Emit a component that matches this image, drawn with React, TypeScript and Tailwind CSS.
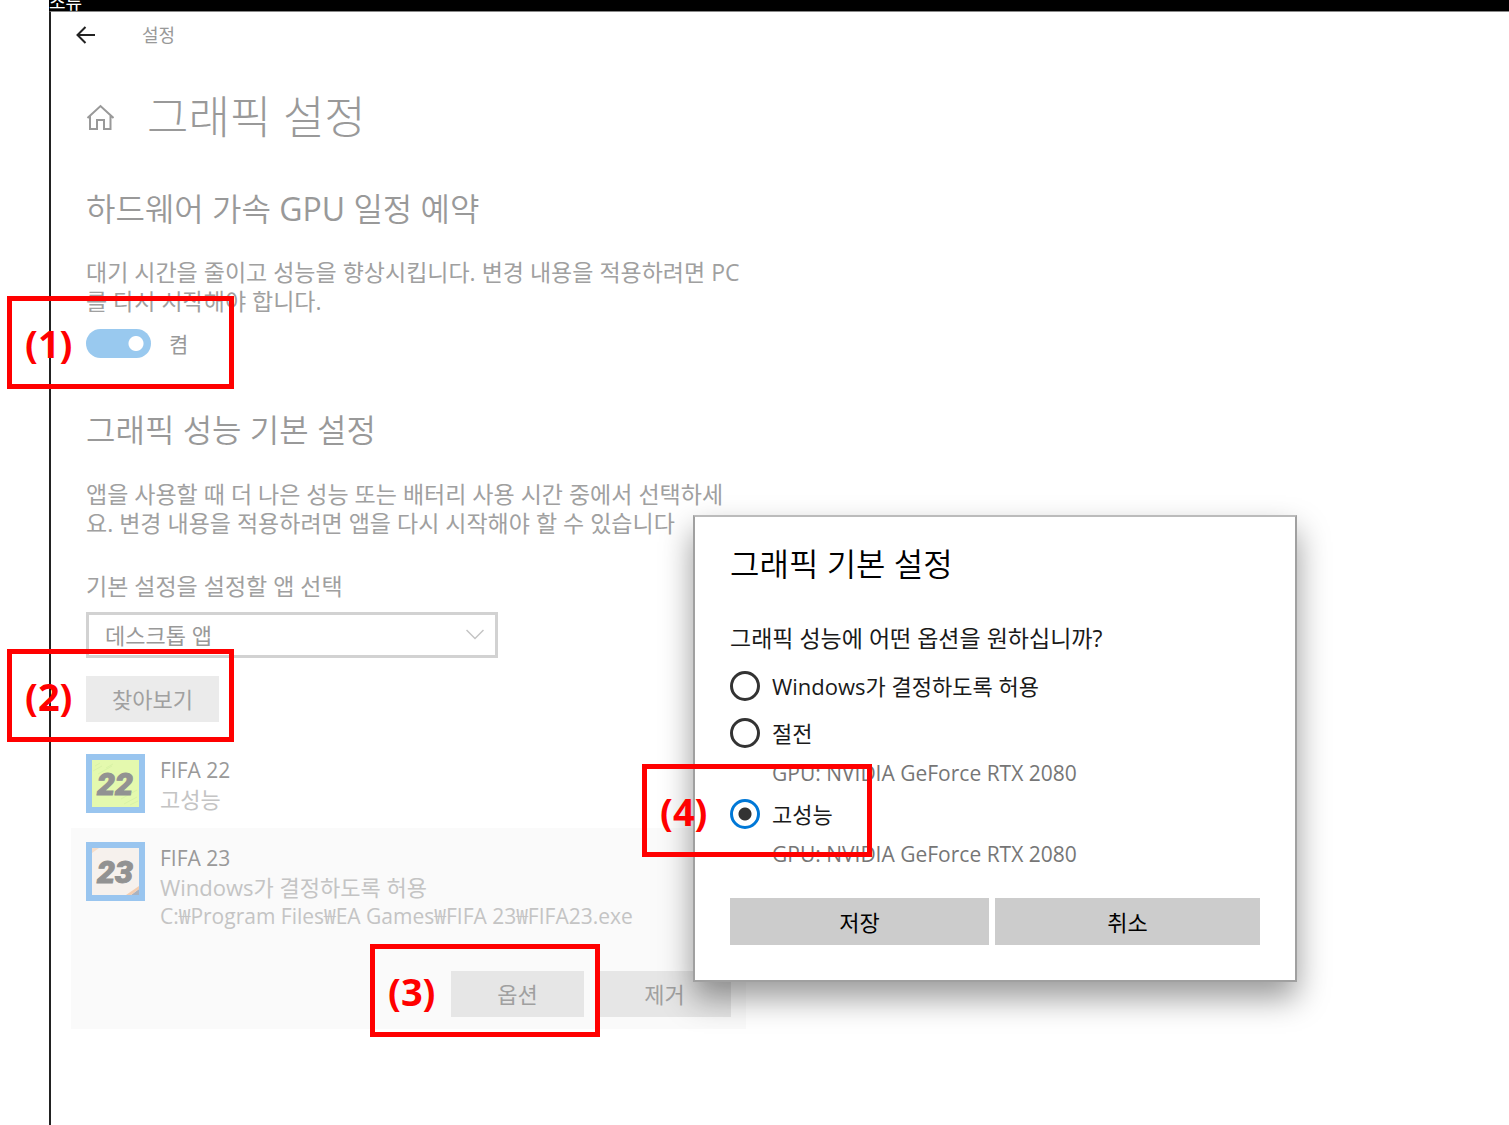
import { useState } from "react";
import type { ReactNode } from "react";

interface CalloutProps {
  label: string;
  className: string;
}

const Callout = ({ label, className }: CalloutProps) => (
  <div
    className={`pointer-events-none absolute z-20 flex h-[93px] items-center border-5 border-[#ff0000] pl-[13px] text-[38px] leading-10 font-bold text-[#ff0000] ${className}`}
  >
    {label}
  </div>
);

const SectionTitle = ({ children }: { children: ReactNode }) => (
  <h2 className="text-[32px] leading-10 font-[350] text-[#999]">{children}</h2>
);

const GrayButton = ({ children }: { children: ReactNode }) => (
  <button type="button" className="h-[46px] w-[133px] bg-black/8 text-[22px] leading-7 text-[#a0a0a0]">
    {children}
  </button>
);

const AppIcon = ({ kind }: { kind: "22" | "23" }) => (
  <svg viewBox="0 0 59 59" className="size-[59px] shrink-0" aria-hidden="true">
    <rect width="59" height="59" fill="#99c5ef" />
    <rect x="6" y="6" width="47" height="47" fill={kind === "22" ? "#e4f9ae" : "#f6f1ed"} />
    {kind === "22" ? (
      <path
        d="M7 17l9-5M12 20l14-8M20 14l7-4M38 50l13-7M35 45l16-9M44 51l8-4M9 12l5-3"
        stroke="#d9f3a6"
        strokeWidth="1"
      />
    ) : (
      <>
        <path d="M6 6h7l-7 5z" fill="#f6ddc9" />
        <path d="M45 53l8-6v6z" fill="#a9b2c0" />
        <path d="M40 53l13-9v3l-8 6z" fill="#f3cdb0" />
      </>
    )}
    <text
      x="29"
      y="41"
      textAnchor="middle"
      fill="#929292"
      stroke="#929292"
      strokeWidth="1"
      fontFamily="Roboto, sans-serif"
      fontSize="32"
      fontStyle="italic"
      fontWeight="900"
    >
      {kind}
    </text>
  </svg>
);

interface OptionProps {
  value: string;
  selected: string;
  onSelect: (value: string) => void;
  children: ReactNode;
}

const Option = ({ value, selected, onSelect, children }: OptionProps) => (
  <label className="flex h-[30px] items-center gap-3 text-[22px] leading-7 text-[#1a1a1a]">
    <input
      type="radio"
      name="gpu-preference"
      value={value}
      checked={selected === value}
      onChange={() => onSelect(value)}
      className="size-[30px] appearance-none rounded-full border-3 border-[#333] bg-white checked:border-[#0078d7] checked:bg-[radial-gradient(circle,#333_6px,transparent_7px)]"
    />
    {children}
  </label>
);

const GpuName = () => <p className="pl-[42px] text-[21px] leading-7 text-[#767676]">GPU: NVIDIA GeForce RTX 2080</p>;

const PreferenceDialog = () => {
  const [selected, setSelected] = useState("high");

  return (
    <section
      role="dialog"
      aria-labelledby="dialog-title"
      className="absolute top-[515px] left-[693px] z-10 w-[604px] border-2 border-[#a0a0a0] border-t-[#bbb] bg-white px-[35px] pt-[27px] pb-[35px] shadow-[0_16px_30px_rgba(0,0,0,0.4)]"
    >
      <h2 id="dialog-title" className="text-[32px] leading-10 font-[350] text-black">
        그래픽 기본 설정
      </h2>
      <p className="mt-[40px] text-[23px] leading-7 text-[#1a1a1a]">그래픽 성능에 어떤 옵션을 원하십니까?</p>
      <div className="mt-[19px]">
        <Option value="auto" selected={selected} onSelect={setSelected}>
          Windows가 결정하도록 허용
        </Option>
      </div>
      <div className="mt-[17px]">
        <Option value="saving" selected={selected} onSelect={setSelected}>
          절전
        </Option>
        <div className="mt-[11px]">
          <GpuName />
        </div>
      </div>
      <div className="relative mt-[12px]">
        <Option value="high" selected={selected} onSelect={setSelected}>
          고성능
        </Option>
        <div className="mt-[11px]">
          <GpuName />
        </div>
        <Callout label="(4)" className="-top-[35px] -left-[88px] w-[230px]" />
      </div>
      <div className="mt-[30px] flex gap-1.5 text-[22px] leading-7 text-black">
        <button type="button" className="h-[47px] w-[259px] bg-[#ccc]">
          저장
        </button>
        <button type="button" className="h-[47px] flex-1 bg-[#ccc]">
          취소
        </button>
      </div>
    </section>
  );
};

export default function App() {
  const [enabled, setEnabled] = useState(true);

  return (
    <div className="relative min-h-screen overflow-hidden bg-white pl-[49px] font-['Open_Sans','Noto_Sans_CJK_KR',sans-serif]">
      <div className="flex h-[11px] items-end overflow-hidden bg-black text-[18px] leading-[18px] text-white">조류</div>
      <main className="min-h-[1114px] border-t border-l-2 border-t-[#888] border-l-[#222] pl-[35px]">
        <div className="-ml-3 flex h-[46px] items-center">
          <button type="button" aria-label="뒤로" className="flex size-6 items-center justify-center">
            <svg viewBox="0 0 20 20" className="size-5" fill="none" stroke="#222" strokeWidth="2">
              <path d="M19 10H2M9.500 2L1.500 10l8 8" />
            </svg>
          </button>
          <span className="ml-11 text-[18px] leading-6 text-[#999]">설정</span>
        </div>

        <header className="mt-[27px] flex h-16 items-center text-[#999]">
          <a href="#home" aria-label="홈">
            <svg viewBox="0 0 28 28" className="size-7" fill="none" stroke="currentColor" strokeWidth="2">
              <path d="M1.500 15L14.500 3l13 12M4 13v13h7v-9h7v9h6.500V13" />
            </svg>
          </a>
          <h1 className="ml-[33px] text-[45px] leading-[64px] font-light">그래픽 설정</h1>
        </header>

        <div className="mt-10">
          <SectionTitle>
            하드웨어 가속 <span className="font-normal">GPU</span> 일정 예약
          </SectionTitle>
        </div>
        <p className="mt-[29px] text-[23px] leading-[29px] text-[#a0a0a0]">
          대기 시간을 줄이고 성능을 향상시킵니다. 변경 내용을 적용하려면 PC
          <br />를 다시 시작해야 합니다.
        </p>
        <div className="relative mt-[13px] flex h-[29px] items-center">
          <label className="flex items-center gap-[18px] text-[21px] leading-7 text-[#999]">
            <input
              type="checkbox"
              role="switch"
              checked={enabled}
              onChange={() => setEnabled(!enabled)}
              className="h-[29px] w-[65px] appearance-none rounded-full bg-[#c8c8c8] bg-[radial-gradient(circle_at_15px_center,white_7px,transparent_8px)] checked:bg-[#99c9ef] checked:bg-[radial-gradient(circle_at_50px_center,white_7px,transparent_8px)]"
            />
            켬
          </label>
          <Callout label="(1)" className="-top-[33px] -left-[79px] w-[227px]" />
        </div>

        <div className="mt-[52px]">
          <SectionTitle>그래픽 성능 기본 설정</SectionTitle>
        </div>
        <p className="mt-[30px] text-[23px] leading-[29px] text-[#a0a0a0]">
          앱을 사용할 때 더 나은 성능 또는 배터리 사용 시간 중에서 선택하세
          <br />
          요. 변경 내용을 적용하려면 앱을 다시 시작해야 할 수 있습니다
        </p>

        <label htmlFor="app-type" className="mt-[34px] block text-[23px] leading-7 text-[#a0a0a0]">
          기본 설정을 설정할 앱 선택
        </label>
        <div className="relative mt-3 h-[46px] w-[412px]">
          <select
            id="app-type"
            className="size-full appearance-none border-3 border-[#d2d2d2] bg-white pl-4 text-[22px] text-[#999]"
          >
            <option>데스크톱 앱</option>
          </select>
          <svg
            viewBox="0 0 18 11"
            className="pointer-events-none absolute top-[17px] right-[14px] h-[11px] w-[18px]"
            fill="none"
            stroke="#c4c4c4"
            strokeWidth="1.500"
          >
            <path d="M0.500 1L9 9.500 17.500 1" />
          </svg>
        </div>
        <div className="relative mt-[18px] flex">
          <GrayButton>찾아보기</GrayButton>
          <Callout label="(2)" className="-top-[27px] -left-[79px] w-[227px]" />
        </div>

        <ul className="mt-[18px] -ml-[15px] w-[675px] text-[21px] leading-[29px]">
          <li className="flex h-[88px] gap-[15px] px-[15px] pt-[14px]">
            <AppIcon kind="22" />
            <div className="pt-[2px] text-[#c4c4c4]">
              <p className="text-[#999]">FIFA 22</p>
              <p className="text-[22px]">고성능</p>
            </div>
          </li>
          <li className="bg-[#fafafa] px-[15px] pt-[14px] pb-3">
            <div className="flex gap-[15px]">
              <AppIcon kind="23" />
              <div className="pt-[2px] text-[#c4c4c4]">
                <p className="text-[#999]">FIFA 23</p>
                <p className="text-[22px]">Windows가 결정하도록 허용</p>
                <p>C:₩Program Files₩EA Games₩FIFA 23₩FIFA23.exe</p>
              </div>
            </div>
            <div className="mt-10 flex justify-end gap-[14px]">
              <div className="relative flex">
                <GrayButton>옵션</GrayButton>
                <Callout label="(3)" className="-top-[27px] -left-[81px] w-[230px]" />
              </div>
              <GrayButton>제거</GrayButton>
            </div>
          </li>
        </ul>
      </main>
      <PreferenceDialog />
    </div>
  );
}
